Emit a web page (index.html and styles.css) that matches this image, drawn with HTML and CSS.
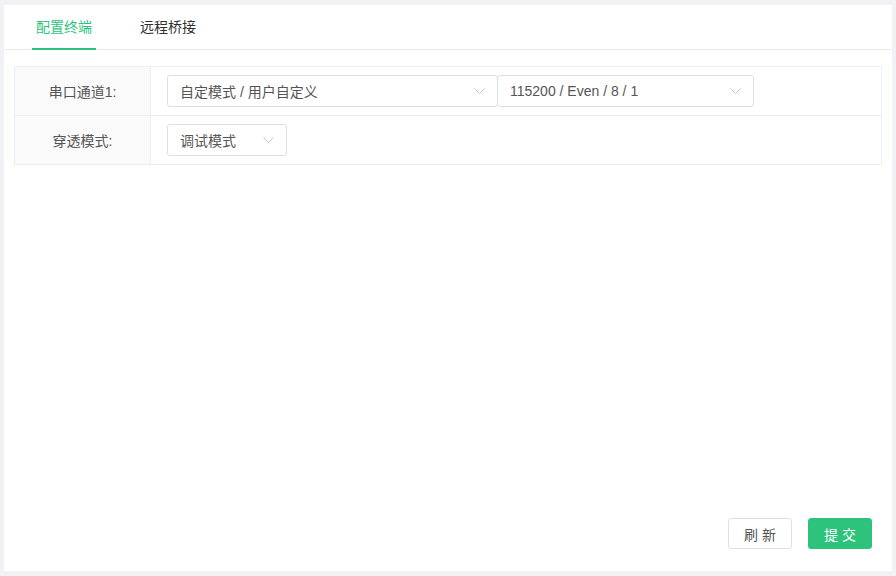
FILE: index.html
```html
<!DOCTYPE html>
<html lang="zh-CN">
<head>
    <meta charset="UTF-8">
    <meta name="viewport" content="width=device-width, initial-scale=1.0">
    <title>配置终端</title>
    <link rel="stylesheet" href="styles.css">
</head>
<body>
    <div class="card">
        <div class="tabs">
            <div class="tab active">配置终端</div>
            <div class="tab">远程桥接</div>
        </div>
        <div class="content">
            <div class="form-table">
                <div class="row">
                    <div class="label">串口通道1:</div>
                    <div class="cell">
                        <div class="select w330">
                            <span>自定模式 / 用户自定义</span>
                            <svg class="arrow" width="11" height="6" viewBox="0 0 11 6"><path d="M0.5 0.5 L5.5 5.5 L10.5 0.5" fill="none" stroke="#c0c4cc" stroke-width="1"/></svg>
                        </div>
                        <div class="select w256 joined">
                            <span>115200 / Even / 8 / 1</span>
                            <svg class="arrow" width="11" height="6" viewBox="0 0 11 6"><path d="M0.5 0.5 L5.5 5.5 L10.5 0.5" fill="none" stroke="#c0c4cc" stroke-width="1"/></svg>
                        </div>
                    </div>
                </div>
                <div class="row">
                    <div class="label">穿透模式:</div>
                    <div class="cell">
                        <div class="select w120">
                            <span>调试模式</span>
                            <svg class="arrow" width="11" height="6" viewBox="0 0 11 6"><path d="M0.5 0.5 L5.5 5.5 L10.5 0.5" fill="none" stroke="#c0c4cc" stroke-width="1"/></svg>
                        </div>
                    </div>
                </div>
            </div>
            <div class="footer">
                <button class="btn">刷 新</button>
                <button class="btn primary">提 交</button>
            </div>
        </div>
    </div>
</body>
</html>
```

FILE: styles.css
```css
*{margin:0;padding:0;box-sizing:border-box;}
html,body{
    height:100%;
    overflow:hidden;
}
body{
    background:#f0f2f5;
    font-family:"Liberation Sans","Noto Sans CJK SC",sans-serif;
    font-size:14px;
    color:#606266;
    padding:5px 4px;
}
.card{
    height:566px;
    background:#fff;
    display:flex;
    flex-direction:column;
}
.tabs{
    height:45px;
    border-bottom:1px solid #e8eaec;
    display:flex;
    padding-left:28px;
}
.tab{
    padding:0 4px;
    margin-right:40px;
    line-height:44px;
    color:#303133;
    position:relative;
}
.tab.active{
    color:#2ec37c;
}
.tab.active::after{
    content:"";
    position:absolute;
    left:0;
    right:0;
    bottom:-1px;
    height:2px;
    background:#2ec37c;
}
.content{
    flex:1;
    padding:16px 10px 22px;
    display:flex;
    flex-direction:column;
}
.form-table{
    border:1px solid #ebeef5;
}
.row{
    display:flex;
    height:48px;
}
.row + .row{
    height:49px;
    border-top:1px solid #ebeef5;
}
.label{
    width:136px;
    background:#fafafa;
    border-right:1px solid #ebeef5;
    display:flex;
    align-items:center;
    justify-content:center;
    color:#555;
}
.cell{
    flex:1;
    display:flex;
    align-items:center;
    padding-left:16px;
}
.select{
    height:32px;
    border:1px solid #dcdfe6;
    border-radius:3px;
    display:flex;
    align-items:center;
    justify-content:space-between;
    padding:0 12px;
    color:#555;
    background:#fff;
}
.select.joined{
    margin-left:-1px;
}
.w330{width:331px;}
.w256{width:257px;}
.w120{width:120px;}
.arrow{
    display:block;
    flex-shrink:0;
}
.footer{
    margin-top:auto;
    display:flex;
    justify-content:flex-end;
    gap:16px;
    padding-right:10px;
}
.btn{
    width:64px;
    height:31px;
    border:1px solid #dcdfe6;
    border-radius:3px;
    background:#fff;
    color:#555;
    font-family:inherit;
    font-size:14px;
}
.btn.primary{
    background:#2ec37c;
    border-color:#2ec37c;
    color:#fff;
}
```
